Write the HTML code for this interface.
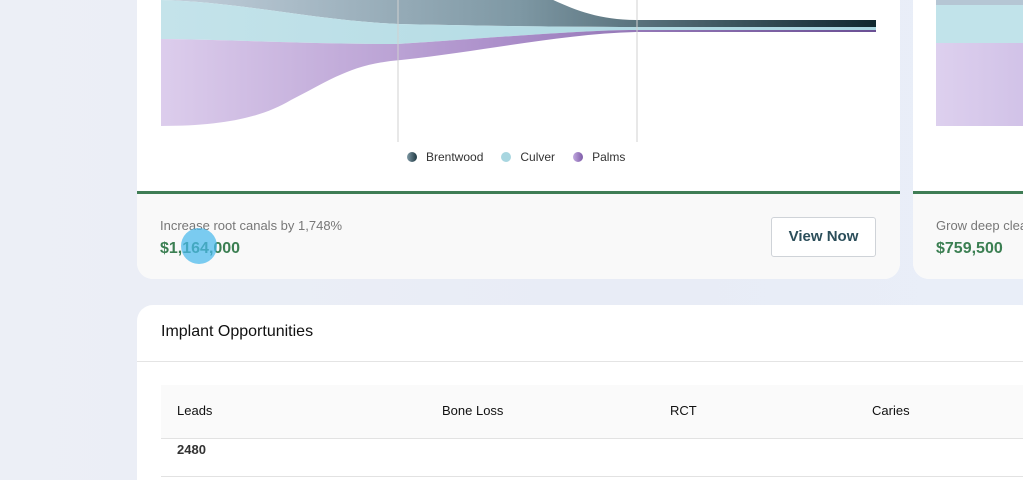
<!DOCTYPE html>
<html><head><meta charset="utf-8"><style>
*{margin:0;padding:0;box-sizing:border-box}
html,body{width:1023px;height:480px;overflow:hidden}
body{position:relative;font-family:"Liberation Sans",sans-serif;background:linear-gradient(90deg,#eceff6 0%,#e8ecf6 60%,#e9eef8 100%)}
.card{position:absolute;background:#fff;border-radius:16px;overflow:hidden}
.foot{position:absolute;left:0;right:0;background:#f9f9f9;border-top:3px solid #3f7d55}
.t{position:absolute;white-space:nowrap}
</style></head><body>
<div class="card" style="left:137px;top:-30px;width:763px;height:309px;">
 <svg style="position:absolute;left:0;top:0" width="763" height="230">
  <defs>
   <linearGradient id="gb" x1="0" x2="1"><stop offset="0" stop-color="#c3d0dc"/><stop offset="0.5" stop-color="#7e98a4"/><stop offset="1" stop-color="#10272f"/></linearGradient>
   <linearGradient id="gc" x1="0" x2="1"><stop offset="0" stop-color="#c4e3ea"/><stop offset="1" stop-color="#a8d6e0"/></linearGradient>
   <linearGradient id="gp" x1="0" x2="1"><stop offset="0" stop-color="#dccdec"/><stop offset="0.5" stop-color="#a98cc8"/><stop offset="1" stop-color="#6a4f94"/></linearGradient>
  </defs>
  <g transform="translate(24,30)">
  <path d="M0,-30 L300,-30 C380,-20 400,20 476,20 L715,20 L715,27 L476,27 C400,27 330,26 237,24 C150,20 80,2 0,0 Z" fill="url(#gb)"/>
  <path d="M0,0 C80,2 150,20 237,24 C330,26 400,27 476,27 L715,27 L715,30 L476,30 C420,30 330,38 237,44 C150,44 80,40 0,39 Z" fill="url(#gc)"/>
  <path d="M0,39 C80,40 150,44 237,44 C330,38 420,30 476,30 L715,30 L715,32 L476,32 C400,34 330,50 240,60 C190,64 170,80 130,100 C100,118 60,126 0,126 Z" fill="url(#gp)"/>
  <line x1="237" y1="-30" x2="237" y2="142" stroke="#d0d0d0"/>
  <line x1="476" y1="-30" x2="476" y2="142" stroke="#d0d0d0"/>
  </g>
 </svg>
 <div class="t" style="left:270px;top:180px;font-size:12px;color:#333;display:flex;align-items:center">
  <span style="width:10px;height:10px;border-radius:50%;background:linear-gradient(90deg,#7e98a4,#1f3842);margin-right:9px"></span>Brentwood
  <span style="width:10px;height:10px;border-radius:50%;background:#a8d6e0;margin:0 9px 0 18px"></span>Culver
  <span style="width:10px;height:10px;border-radius:50%;background:linear-gradient(90deg,#c1a9df,#7e5ba8);margin:0 9px 0 18px"></span>Palms
 </div>
 <div class="foot" style="top:221px;height:88px">
  <div class="t" style="left:23px;top:24px;font-size:13px;color:#777">Increase root canals by 1,748%</div>
  <div class="t" style="left:23px;top:46px;font-size:16px;font-weight:bold;color:#3b7f52">$1,164,000</div>
  <div style="position:absolute;left:634px;top:23px;width:105px;height:40px;border:1px solid #cfd3d8;border-radius:3px;background:#fff;font-size:15px;font-weight:bold;color:#2b4e5a;text-align:center;line-height:38px">View Now</div>
 </div>
</div>
<div class="card" style="left:913px;top:-30px;width:140px;height:309px;">
 <div style="position:absolute;left:23px;top:30px;width:120px;height:5px;background:#b5c6d4"></div>
 <div style="position:absolute;left:23px;top:35px;width:120px;height:38px;background:#c1e3ea"></div>
 <div style="position:absolute;left:23px;top:73px;width:120px;height:83px;background:linear-gradient(90deg,#ddd0ee,#cdbde5)"></div>
 <div class="foot" style="top:221px;height:88px">
  <div class="t" style="left:23px;top:24px;font-size:13px;color:#777">Grow deep cleanings</div>
  <div class="t" style="left:23px;top:46px;font-size:16px;font-weight:bold;color:#3b7f52">$759,500</div>
 </div>
</div>
<div style="position:absolute;left:181px;top:228px;width:36px;height:36px;border-radius:50%;background:rgba(72,185,235,0.72)"></div>
<div class="card" style="left:137px;top:305px;width:900px;height:175px;border-bottom-left-radius:0;border-bottom-right-radius:0">
 <div class="t" style="left:24px;top:18px;font-size:16px;color:#111">Implant Opportunities</div>
 <div style="position:absolute;left:0;right:0;top:56px;border-top:1px solid #e4e4e4"></div>
 <div style="position:absolute;left:24px;right:0;top:80px;height:54px;background:#fafafa;border-bottom:1px solid #e2e2e2"></div>
 <div class="t" style="left:40px;top:98px;font-size:13px;color:#111">Leads</div>
 <div class="t" style="left:305px;top:98px;font-size:13px;color:#111">Bone Loss</div>
 <div class="t" style="left:533px;top:98px;font-size:13px;color:#111">RCT</div>
 <div class="t" style="left:735px;top:98px;font-size:13px;color:#111">Caries</div>
 <div class="t" style="left:40px;top:137px;font-size:13px;font-weight:bold;color:#333">2480</div>
 <div style="position:absolute;left:24px;right:0;top:171px;border-top:1px solid #e2e2e2"></div>
</div>
</body></html>
